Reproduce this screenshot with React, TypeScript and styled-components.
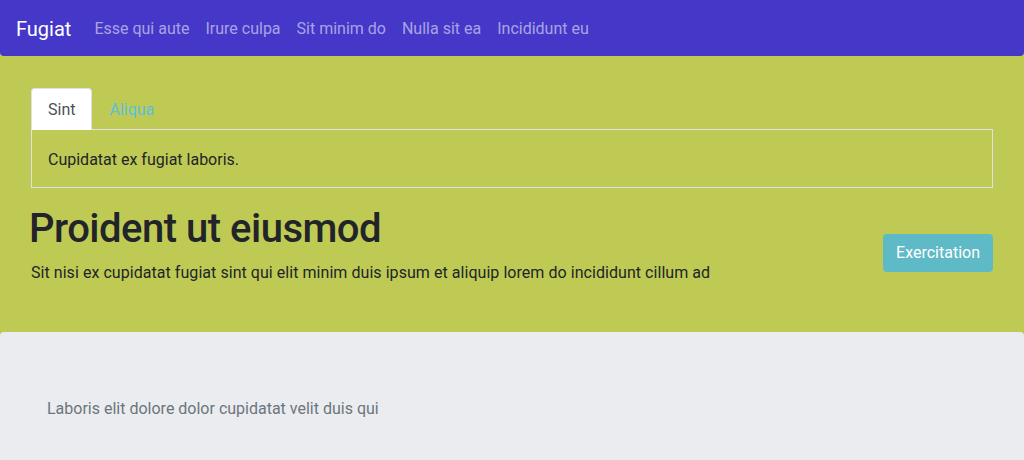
import React, { useState } from "react";
import styled, { createGlobalStyle } from "styled-components";

const Global = createGlobalStyle`
  html, body { margin: 0; padding: 0; }
  body {
    background: #bfca54;
    font-family: Roboto, "Liberation Sans", sans-serif;
    font-size: 16px;
    line-height: 1.5;
    color: #212529;
  }
  * { box-sizing: border-box; }
`;

const Navbar = styled.nav`
  height: 56px;
  background: #4537c7;
  border-radius: 0 0 4px 4px;
  display: flex;
  align-items: center;
  padding: 2px 16px 0;
`;

const Brand = styled.a`
  color: #fff;
  font-size: 20px;
  margin-right: 15px;
  text-decoration: none;
`;

const NavLinks = styled.div`
  display: flex;
`;

const NavLink = styled.a`
  color: rgba(255, 255, 255, 0.55);
  padding: 8px 8px;
  text-decoration: none;
`;

const Hero = styled.section`
  padding: 32px 31px 47px;
`;

const TabList = styled.div`
  display: flex;
  border-bottom: 1px solid #dee2e6;
`;

const Tab = styled.button<{ $active?: boolean }>`
  font: inherit;
  padding: 9px 16px 7px;
  margin-bottom: -1px;
  border: 1px solid ${(p) => (p.$active ? "#dee2e6" : "transparent")};
  border-bottom-color: ${(p) => (p.$active ? "#fff" : "transparent")};
  border-radius: 4px 4px 0 0;
  background: ${(p) => (p.$active ? "#fff" : "transparent")};
  color: ${(p) => (p.$active ? "#495057" : "#5bc0de")};
  cursor: pointer;
`;

const TabPanel = styled.div`
  border: 1px solid #dee2e6;
  border-top: none;
  padding: 18px 16px 15px;
`;

const HeroRow = styled.div`
  display: flex;
  align-items: center;
  justify-content: space-between;
  margin-top: 17px;
`;

const Title = styled.h1`
  font-size: 40px;
  font-weight: 500;
  line-height: 1.2;
  letter-spacing: -0.5px;
  margin: 0 0 8px -2px;
`;

const Lead = styled.p`
  margin: 0;
  letter-spacing: 0.05px;
`;

const Button = styled.button`
  font: inherit;
  background: #5fbac8;
  color: #fff;
  border: none;
  border-radius: 4px;
  padding: 7px 13px;
  margin-top: 16px;
  cursor: pointer;
`;

const Footer = styled.section`
  background: #ebecef;
  border-radius: 4px 4px 0 0;
  padding: 65px 47px 60px;
  color: #6c757d;
`;

export default function App() {
  const [tab, setTab] = useState(0);
  return (
    <>
      <Global />
      <Navbar>
        <Brand href="#">Fugiat</Brand>
        <NavLinks>
          {["Esse qui aute", "Irure culpa", "Sit minim do", "Nulla sit ea", "Incididunt eu"].map((l) => (
            <NavLink key={l} href="#">{l}</NavLink>
          ))}
        </NavLinks>
      </Navbar>
      <Hero>
        <TabList>
          <Tab $active={tab === 0} onClick={() => setTab(0)}>Sint</Tab>
          <Tab $active={tab === 1} onClick={() => setTab(1)}>Aliqua</Tab>
        </TabList>
        <TabPanel>{tab === 0 ? "Cupidatat ex fugiat laboris." : "Aliqua."}</TabPanel>
        <HeroRow>
          <div>
            <Title>Proident ut eiusmod</Title>
            <Lead>Sit nisi ex cupidatat fugiat sint qui elit minim duis ipsum et aliquip lorem do incididunt cillum ad</Lead>
          </div>
          <Button>Exercitation</Button>
        </HeroRow>
      </Hero>
      <Footer>Laboris elit dolore dolor cupidatat velit duis qui</Footer>
    </>
  );
}
